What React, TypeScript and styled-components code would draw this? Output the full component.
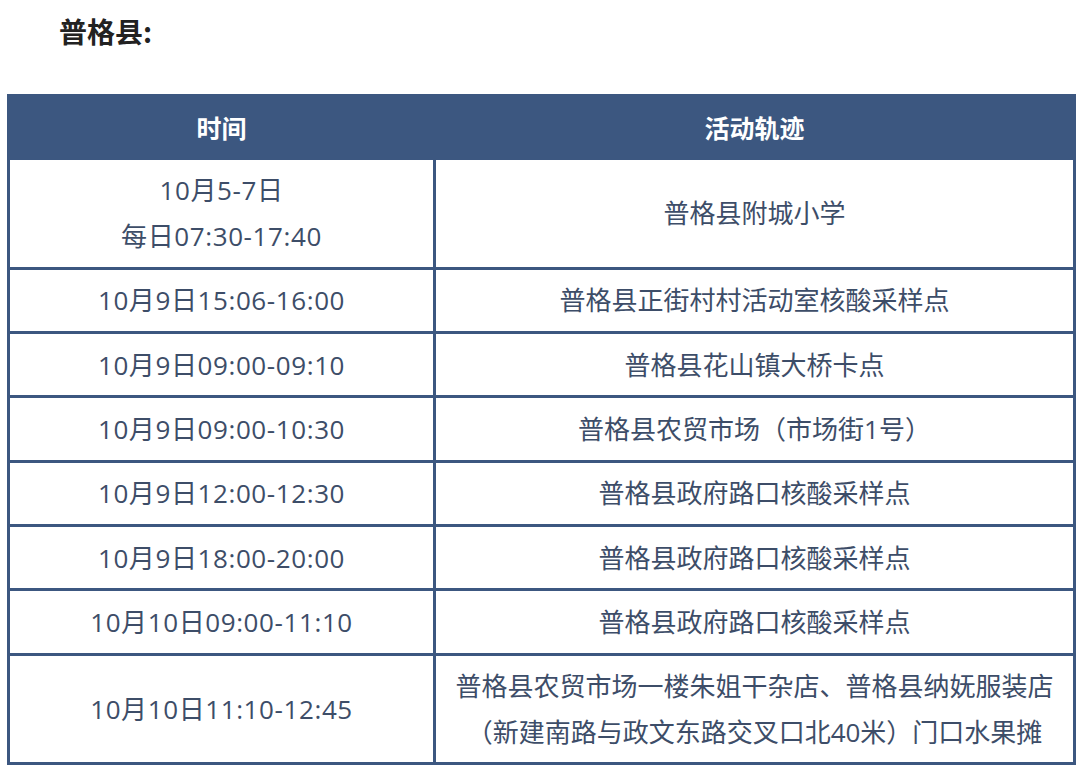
import styled, { createGlobalStyle } from "styled-components";

const GlobalStyle = createGlobalStyle`
  html, body {
    margin: 0;
    padding: 0;
    background: #ffffff;
  }
  body {
    font-family: "Open Sans", "Noto Sans CJK SC", sans-serif;
  }
`;

const Page = styled.div`
  width: 1080px;
  height: 776px;
  overflow: hidden;
  box-sizing: border-box;
  padding: 14px 0 0 7px;
`;

const Title = styled.h2`
  margin: 0 0 46px 52px;
  font-family: "Noto Sans CJK SC", sans-serif;
  font-size: 28px;
  line-height: 34px;
  font-weight: 700;
  color: #222222;
`;

const Table = styled.table`
  width: 1066px;
  border-collapse: collapse;
  table-layout: fixed;
  color: #3d4d68;
`;

const HeadCell = styled.th`
  height: 60px;
  background: #3c5780;
  color: #ffffff;
  font-family: "Noto Sans CJK SC", sans-serif;
  font-size: 25px;
  font-weight: 700;
  text-align: center;
  border: 3px solid #3c5780;
  padding: 0;
`;

const Cell = styled.td<{ $tall?: boolean; $time?: boolean }>`
  height: ${(p) => (p.$tall ? "106.5px" : "61.4px")};
  border: 3px solid #3c5780;
  padding: 0;
  text-align: center;
  font-size: 26px;
  line-height: 46px;
  letter-spacing: ${(p) => (p.$time ? "0.6px" : "0")};
  vertical-align: middle;
`;

const rows: { time: string[]; place: string[] }[] = [
  { time: ["10月5-7日", "每日07:30-17:40"], place: ["普格县附城小学"] },
  { time: ["10月9日15:06-16:00"], place: ["普格县正街村村活动室核酸采样点"] },
  { time: ["10月9日09:00-09:10"], place: ["普格县花山镇大桥卡点"] },
  { time: ["10月9日09:00-10:30"], place: ["普格县农贸市场（市场街1号）"] },
  { time: ["10月9日12:00-12:30"], place: ["普格县政府路口核酸采样点"] },
  { time: ["10月9日18:00-20:00"], place: ["普格县政府路口核酸采样点"] },
  { time: ["10月10日09:00-11:10"], place: ["普格县政府路口核酸采样点"] },
  {
    time: ["10月10日11:10-12:45"],
    place: [
      "普格县农贸市场一楼朱姐干杂店、普格县纳妩服装店",
      "（新建南路与政文东路交叉口北40米）门口水果摊",
    ],
  },
];

const Lines = ({ items }: { items: string[] }) => (
  <>
    {items.map((t, i) => (
      <div key={i}>{t}</div>
    ))}
  </>
);

export default function App() {
  return (
    <Page>
      <GlobalStyle />
      <Title>普格县:</Title>
      <Table>
        <colgroup>
          <col style={{ width: 426 }} />
          <col style={{ width: 640 }} />
        </colgroup>
        <thead>
          <tr>
            <HeadCell>时间</HeadCell>
            <HeadCell>活动轨迹</HeadCell>
          </tr>
        </thead>
        <tbody>
          {rows.map((r, i) => {
            const tall = r.time.length > 1 || r.place.length > 1;
            return (
              <tr key={i}>
                <Cell $tall={tall} $time>
                  <Lines items={r.time} />
                </Cell>
                <Cell $tall={tall}>
                  <Lines items={r.place} />
                </Cell>
              </tr>
            );
          })}
        </tbody>
      </Table>
    </Page>
  );
}
